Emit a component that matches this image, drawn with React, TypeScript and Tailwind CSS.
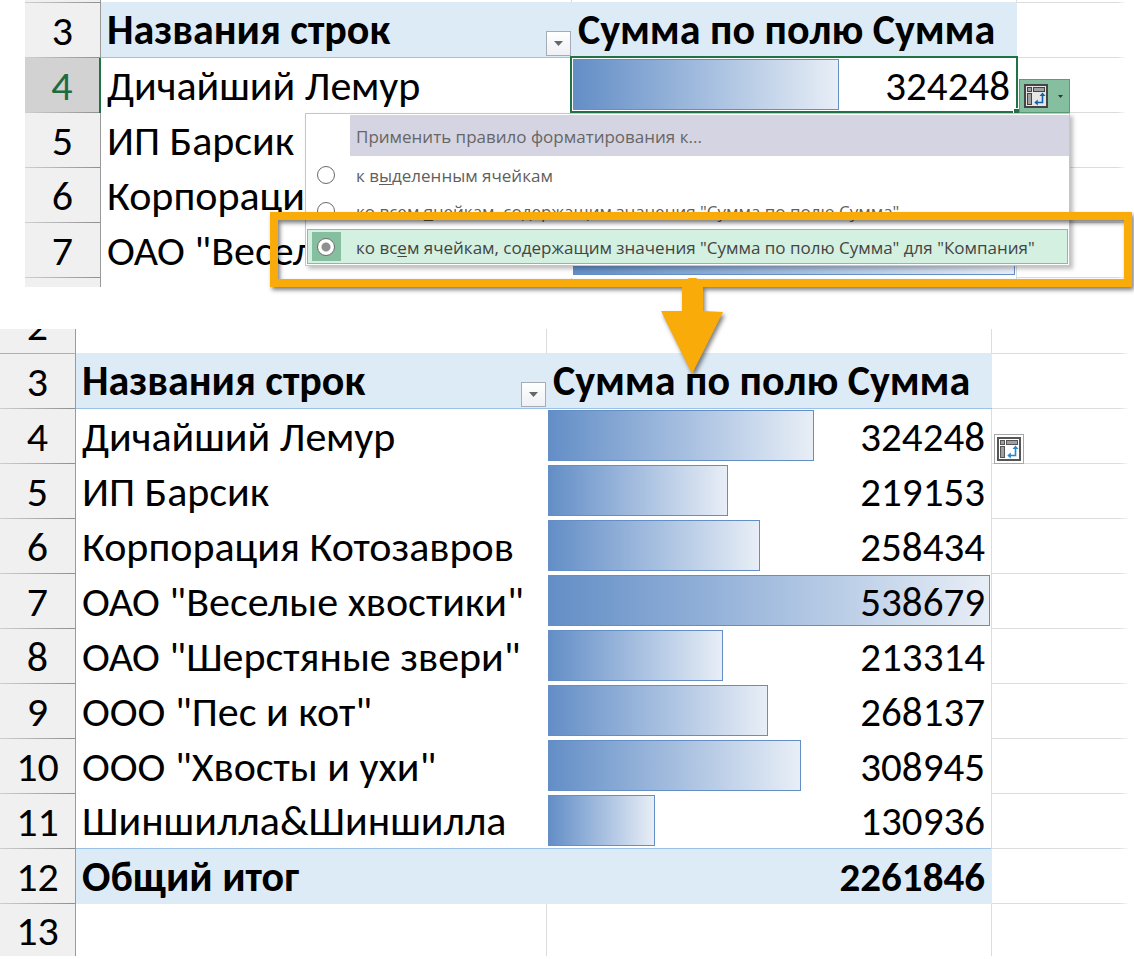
import type { ReactNode } from 'react'
import clsx from 'clsx'

type Row = { n: number; name: string; value: number }

const ROWS: Row[] = [
  { n: 4, name: 'Дичайший Лемур', value: 324248 },
  { n: 5, name: 'ИП Барсик', value: 219153 },
  { n: 6, name: 'Корпорация Котозавров', value: 258434 },
  { n: 7, name: 'ОАО "Веселые хвостики"', value: 538679 },
  { n: 8, name: 'ОАО "Шерстяные звери"', value: 213314 },
  { n: 9, name: 'ООО "Пес и кот"', value: 268137 },
  { n: 10, name: 'ООО "Хвосты и ухи"', value: 308945 },
  { n: 11, name: 'Шиншилла&Шиншилла', value: 130936 },
]

const TOTAL = ROWS.reduce((sum, r) => sum + r.value, 0)
const MAX = Math.max(...ROWS.map(r => r.value))

function PivotIcon({ accent, frame, fill }: { accent: string; frame: string; fill: string }) {
  return (
    <svg width="24" height="24" viewBox="0 0 24 24" fill="none" aria-hidden="true">
      <rect x="1" y="1" width="22" height="22" fill={fill} stroke={frame} strokeWidth="2" />
      <rect x="3.5" y="3.5" width="4" height="4" fill="#a0a0a0" stroke={frame} />
      <rect x="9.5" y="3.5" width="11" height="4" fill="#a0a0a0" stroke={frame} />
      <rect x="3.5" y="9.500" width="4" height="11" fill="#a0a0a0" stroke={frame} />
      <path d="M18.500 11v7.500H12" stroke={accent} strokeWidth="1.6" />
      <path d="M18.500 8.500l3 3.500h-6zM10.300 18.500l3.500-3v6z" fill={accent} />
    </svg>
  )
}

function RowHead({ n, active }: { n?: number; active?: boolean }) {
  return (
    <th
      scope="row"
      className={clsx(
        'bg-[linear-gradient(to_right,#cfcfcf,#8f8f8f)] bg-[length:100%_1px] bg-bottom bg-no-repeat p-0 text-center align-bottom font-normal',
        active ? 'border-r-2 border-[#217346] bg-[#d2d2d2] text-[#1e6b41]' : 'border-r border-[#9a9a9a] bg-[#f0f0f0]',
      )}
    >
      {n}
    </th>
  )
}

// empty column to the right of the pivot, only grid lines and the smart tag
function Rest({ children, last }: { children?: ReactNode; last?: boolean }) {
  return (
    <td
      className={clsx(
        'p-0 align-bottom',
        !last && 'bg-[linear-gradient(to_right,#dcdcdc_92%,transparent)] bg-[length:100%_1px] bg-bottom bg-no-repeat',
      )}
    >
      {children && <div className="ml-0.5 flex">{children}</div>}
    </td>
  )
}

function Columns() {
  return (
    <colgroup>
      <col className="w-[76px]" />
      <col className="w-[471px]" />
      <col className="w-[445px]" />
      <col />
    </colgroup>
  )
}

function HeaderRow() {
  return (
    <tr className="h-[55px]">
      <RowHead n={3} />
      <th scope="col" className="border-b border-[#9bc2e6] bg-[#ddebf7] p-0 text-left">
        <div className="flex h-[54px] items-end justify-between pl-1.5">
          <span>Названия строк</span>
          <button
            type="button"
            aria-label="Фильтр строк"
            className="mr-px mb-px flex size-[25px] items-center justify-center border border-[#a6acb5] bg-linear-to-b from-white to-[#eef0f4]"
          >
            <svg width="9" height="5" viewBox="0 0 9 5" aria-hidden="true">
              <path d="M0 0h9L4.500 5z" fill="#666" />
            </svg>
          </button>
        </div>
      </th>
      <th scope="col" className="border-b border-[#9bc2e6] bg-[#ddebf7] p-0 pl-1.5 text-left align-bottom">
        Сумма по полю Сумма
      </th>
      <Rest />
    </tr>
  )
}

function DataRow({ row, active, tag, last }: { row: Row; active?: boolean; tag?: ReactNode; last?: boolean }) {
  return (
    <tr className="h-[55px]">
      <RowHead n={row.n} active={active} />
      <td className={clsx('p-0 pl-1.5 align-bottom whitespace-nowrap', last && 'border-b border-[#9bc2e6]')}>{row.name}</td>
      <td className="border-r border-[#dcdcdc] p-0">
        <div
          className={clsx(
            'relative flex h-[55px] items-end justify-end pr-1.5 text-[41px]',
            last && 'border-b border-[#9bc2e6]',
          )}
        >
          <div className="absolute inset-x-px top-px h-[51px]">
            <div
              className="h-full border border-[#638ec6] bg-linear-to-r from-[#638ec6] to-[#e8eef6]"
              style={{ width: `${(row.value / MAX) * 100}%` }}
            />
          </div>
          <span className="relative">{row.value}</span>
          {active && (
            <div className="absolute -inset-x-0.5 -top-0.5 bottom-0 border-2 border-[#217346]">
              <div className="absolute -right-[3px] -bottom-[3px] size-1.5 border-t border-l border-white bg-[#217346]" />
            </div>
          )}
        </div>
      </td>
      <Rest>{tag}</Rest>
    </tr>
  )
}

const TABLE = 'w-full table-fixed border-separate border-spacing-0 text-[42px] leading-[54px]'

function Option({ id, children, checked }: { id: string; children: ReactNode; checked?: boolean }) {
  return (
    <div
      className={clsx(
        'mx-px mt-px flex h-[35px] items-center border pl-1',
        checked ? 'border-[#86bfa0] bg-[#d3f0e0] text-[#444]' : 'border-transparent text-[#5f5f5f]',
      )}
    >
      <div className={clsx('flex size-[29px] shrink-0 items-center pl-[5px]', checked && 'bg-[#86bfa0]')}>
        <input
          id={id}
          type="radio"
          name="scope"
          defaultChecked={checked}
          className="size-[18px] appearance-none rounded-full border border-[#6a6a6a] bg-white checked:bg-[radial-gradient(circle,#8f8f8f_4px,white_5px)]"
        />
      </div>
      <label htmlFor={id} className="pt-0.5 pl-[15px] whitespace-nowrap">{children}</label>
    </div>
  )
}

function RuleMenu() {
  return (
    <div className="absolute top-[113px] left-[305px] w-[765px] border border-[#c6c6c6] bg-white pt-px pb-px font-['Open_Sans','Noto_Sans',sans-serif] text-[17px] leading-6 shadow-[3px_3px_4px_rgba(0,0,0,0.25)]">
      <div className="ml-11 flex h-[41px] items-center bg-[#d5d4e2] pt-0.5 pl-1.5 text-[#666]">
        Применить правило форматирования к...
      </div>
      <Option id="scope-selected">к в<u className="underline-offset-2">ы</u>деленным ячейкам</Option>
      <Option id="scope-values">ко всем <u className="underline-offset-2">я</u>чейкам, содержащим значения "Сумма по полю Сумма"</Option>
      <Option id="scope-company" checked>
        ко вс<u className="underline-offset-2">е</u>м ячейкам, содержащим значения "Сумма по полю Сумма" для "Компания"
      </Option>
    </div>
  )
}

export default function App() {
  return (
    <main className="min-h-screen overflow-hidden bg-white font-['Carlito','Lato','Noto_Sans',sans-serif] text-black">
      <section className="relative">
        <div className="h-[287px] overflow-hidden pr-2 pl-[25px]">
          <table className={TABLE}>
            <Columns />
            <tbody>
              <tr className="h-[3px]">
                <RowHead />
                <td className="border-r border-b border-r-[#dcdcdc] border-b-[#ddebf7] p-0" />
                <td className="border-r border-b border-r-[#dcdcdc] border-b-[#ddebf7] p-0" />
                <Rest />
              </tr>
              <HeaderRow />
              {ROWS.slice(0, 4).map(r => (
                <DataRow
                  key={r.n}
                  row={r}
                  active={r.n === 4}
                  tag={r.n === 4 && (
                    <button
                      type="button"
                      aria-label="Параметры форматирования"
                      className="flex h-[34px] w-[51px] items-center gap-2.5 border border-[#5a9c78] bg-[#86bfa0] pl-1"
                    >
                      <PivotIcon accent="#0f62a8" frame="#444" fill="#e6e6e6" />
                      <svg width="5" height="3" viewBox="0 0 5 3" aria-hidden="true">
                        <path d="M0 0h5L2.500 3z" fill="#333" />
                      </svg>
                    </button>
                  )}
                />
              ))}
              <tr className="h-3">
                <RowHead />
                <td className="border-r border-[#dcdcdc] p-0" />
                <td className="border-r border-[#dcdcdc] p-0" />
                <Rest last />
              </tr>
            </tbody>
          </table>
        </div>

        <RuleMenu />

        <div className="absolute top-[212px] right-0.5 left-[270px] h-[75px] border-8 border-[#f9ab0a] drop-shadow-[2px_3px_2px_rgba(0,0,0,0.5)]">
          <svg className="absolute top-[58px] left-[383px]" width="62" height="96" viewBox="0 0 62 96" aria-hidden="true">
            <path d="M21 33V10a10.500 10.500 0 0 1 21 0v23l20 1L31 96 0 33z" fill="#f9ab0a" />
          </svg>
        </div>
      </section>

      <section className="mt-[42px] pr-1">
        <table className={TABLE}>
          <Columns />
          <tbody>
            <tr className="h-[25px]">
              <th scope="row" className="border-r border-b border-r-[#9a9a9a] border-b-[#b0b0b0] bg-[#f0f0f0] p-0 font-normal">
                <div className="flex h-6 items-end justify-center overflow-hidden">2</div>
              </th>
              <td className="border-r border-b border-r-[#dcdcdc] border-b-[#ddebf7] p-0" />
              <td className="border-r border-b border-r-[#dcdcdc] border-b-[#ddebf7] p-0" />
              <Rest />
            </tr>
            <HeaderRow />
            {ROWS.map(r => (
              <DataRow
                key={r.n}
                row={r}
                last={r.n === 11}
                tag={r.n === 4 && (
                  <button
                    type="button"
                    aria-label="Параметры форматирования"
                    className="flex size-[30px] items-center justify-center border border-[#a8a8a8] bg-white"
                  >
                    <PivotIcon accent="#2488cc" frame="#555" fill="#fff" />
                  </button>
                )}
              />
            ))}
            <tr className="h-[55px] font-bold">
              <RowHead n={12} />
              <td className="bg-[#ddebf7] p-0 pl-1.5 align-bottom">Общий итог</td>
              <td className="bg-[#ddebf7] p-0 pr-[7px] text-right align-bottom text-[41px]">{TOTAL}</td>
              <Rest />
            </tr>
            <tr className="h-[52px]">
              <th scope="row" className="border-r border-[#9a9a9a] bg-[#f0f0f0] p-0 font-normal">
                <div className="h-[52px]">13</div>
              </th>
              <td className="border-r border-[#dcdcdc] p-0" />
              <td className="border-r border-[#dcdcdc] p-0" />
              <Rest last />
            </tr>
          </tbody>
        </table>
      </section>
    </main>
  )
}
